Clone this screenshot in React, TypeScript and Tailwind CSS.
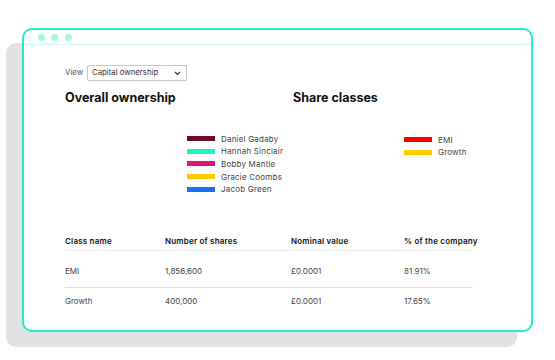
import React from "react";

const people = [
  { name: "Daniel Gadaby", color: "#6b0a2c" },
  { name: "Hannah Sinclair", color: "#1ef0c8" },
  { name: "Bobby Mantle", color: "#e0137f" },
  { name: "Gracie Coombs", color: "#ffc800" },
  { name: "Jacob Green", color: "#1a6ff5" },
];

const classes = [
  { name: "EMI", color: "#ff0000" },
  { name: "Growth", color: "#ffc800" },
];

const rows = [
  ["EMI", "1,856,600", "£0.0001", "81.91%"],
  ["Growth", "400,000", "£0.0001", "17.65%"],
];

function Legend({ items }: { items: { name: string; color: string }[] }) {
  return (
    <div className="flex flex-col gap-[7.7px]">
      {items.map((it) => (
        <div key={it.name} className="flex items-center h-[5px]">
          <div className="w-[28px] h-[5px]" style={{ background: it.color }} />
          <span className="ml-[6px] text-[8px] tracking-[0.2px] leading-none text-[#444] whitespace-nowrap">{it.name}</span>
        </div>
      ))}
    </div>
  );
}

export default function App() {
  return (
    <div
      className="relative w-[555px] h-[360px] bg-white overflow-hidden"
      style={{ fontFamily: "Inter, 'Liberation Sans', sans-serif" }}
    >
      <div className="absolute left-[6px] top-[43px] w-[511px] h-[304px] rounded-[10px] bg-[#e2e2e2]" />
      <div className="relative ml-[22px] mt-[28px] w-[511px] h-[304px] rounded-[10px] border-2 border-[#1ef0c8] bg-white">
        <div className="flex items-center gap-[6.5px] pl-[13.5px] h-[15px] border-b border-[#c9f9ef]">
          <div className="w-[7px] h-[7px] rounded-full bg-[#a6f7e6]" />
          <div className="w-[7px] h-[7px] rounded-full bg-[#a6f7e6]" />
          <div className="w-[7px] h-[7px] rounded-full bg-[#a6f7e6]" />
        </div>
        <div className="pl-[41px] pt-[20px]">
          <div className="flex items-center h-[16px]">
            <span className="text-[7.8px] text-[#555] w-[22px]">View</span>
            <div className="flex items-center justify-between w-[100px] h-[16px] border border-[#c8c8c8] rounded-[1px] pl-[4px] pr-[5px]">
              <span className="text-[7.8px] text-[#333]">Capital ownership</span>
              <svg width="7" height="5" viewBox="0 0 7 5" fill="none">
                <path d="M1 1l2.5 2.5L6 1" stroke="#333" strokeWidth="1.2" />
              </svg>
            </div>
          </div>
          <div className="flex mt-[9px]">
            <h2 className="w-[228px] text-[12.5px] font-bold text-[#111] leading-[16px]">Overall ownership</h2>
            <h2 className="text-[12.5px] font-bold text-[#111] leading-[16px]">Share classes</h2>
          </div>
          <div className="flex mt-[30px]">
            <div className="ml-[122px] w-[217px]">
              <Legend items={people} />
            </div>
            <div className="mt-[1px]">
              <Legend items={classes} />
            </div>
          </div>
          <div className="mt-[41px] w-[408px]">
            <div className="grid grid-cols-[100px_126px_113px_1fr] h-[18px] items-center border-b border-[#e8e8e8] text-[8px] tracking-[0.2px] font-semibold text-[#111] whitespace-nowrap">
              <span>Class name</span>
              <span>Number of shares</span>
              <span>Nominal value</span>
              <span>% of the company</span>
            </div>
            <div className="grid grid-cols-[100px_126px_113px_1fr] h-[37px] pt-[15px] leading-[10px] border-b border-[#ddd] text-[8px] text-[#444]">
              {rows[0].map((c, j) => (
                <span key={j}>{c}</span>
              ))}
            </div>
            <div className="grid grid-cols-[100px_126px_113px_1fr] pt-[8px] leading-[10px] text-[8px] text-[#444]">
              {rows[1].map((c, j) => (
                <span key={j}>{c}</span>
              ))}
            </div>
          </div>
        </div>
      </div>
    </div>
  );
}
